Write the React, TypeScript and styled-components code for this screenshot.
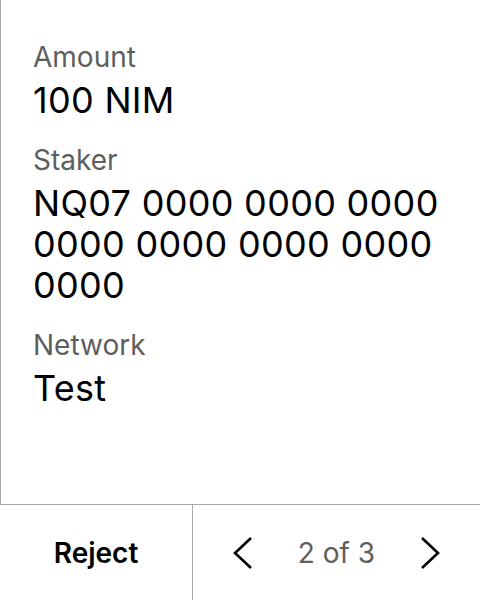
import React from "react";
import styled, { createGlobalStyle } from "styled-components";

const Global = createGlobalStyle`
  html, body { margin: 0; padding: 0; background: #fff; }
  body { font-family: Inter, "Noto Sans", sans-serif; }
`;

const Screen = styled.div`
  width: 480px;
  height: 600px;
  display: flex;
  flex-direction: column;
  background: #fff;
`;

const Content = styled.div`
  height: 505px;
  flex: none;
  box-sizing: border-box;
  border-left: 1px solid #a8a8a8;
  border-bottom: 1px solid #a8a8a8;
  padding: 39px 32px 0 32px;
  display: flex;
  flex-direction: column;
  gap: 21px;
`;

const Field = styled.div`
  display: flex;
  flex-direction: column;
  gap: 5px;
`;

const Label = styled.div`
  font-size: 28px;
  line-height: 36px;
  color: #5e5e5e;
`;

const Value = styled.div`
  font-size: 36px;
  line-height: 41px;
  letter-spacing: 0.3px;
  color: #000;
`;

const Footer = styled.div`
  flex: 1;
  display: flex;
`;

const RejectButton = styled.div`
  width: 193px;
  box-sizing: border-box;
  border-right: 1px solid #a8a8a8;
  display: flex;
  align-items: center;
  justify-content: center;
  font-size: 28px;
  font-weight: 600;
  color: #000;
`;

const Pager = styled.div`
  flex: 1;
  display: flex;
  align-items: center;
  justify-content: space-between;
  padding: 0 40px;
`;

const PageText = styled.div`
  font-size: 28px;
  color: #5e5e5e;
`;

const Chevron = ({ dir }: { dir: "left" | "right" }) => (
  <svg width="20" height="32" viewBox="0 0 20 32" fill="none">
    <path
      d={dir === "left" ? "M18 1 L2 16 L18 31" : "M2 1 L18 16 L2 31"}
      stroke="#000"
      strokeWidth="2.6"
      strokeLinecap="butt"
      strokeLinejoin="miter"
    />
  </svg>
);

export default function App() {
  return (
    <>
      <Global />
      <Screen>
        <Content>
          <Field>
            <Label>Amount</Label>
            <Value>100 NIM</Value>
          </Field>
          <Field>
            <Label>Staker</Label>
            <Value>NQ07 0000 0000 0000 0000 0000 0000 0000 0000</Value>
          </Field>
          <Field>
            <Label>Network</Label>
            <Value>Test</Value>
          </Field>
        </Content>
        <Footer>
          <RejectButton>Reject</RejectButton>
          <Pager>
            <Chevron dir="left" />
            <PageText>2 of 3</PageText>
            <Chevron dir="right" />
          </Pager>
        </Footer>
      </Screen>
    </>
  );
}
